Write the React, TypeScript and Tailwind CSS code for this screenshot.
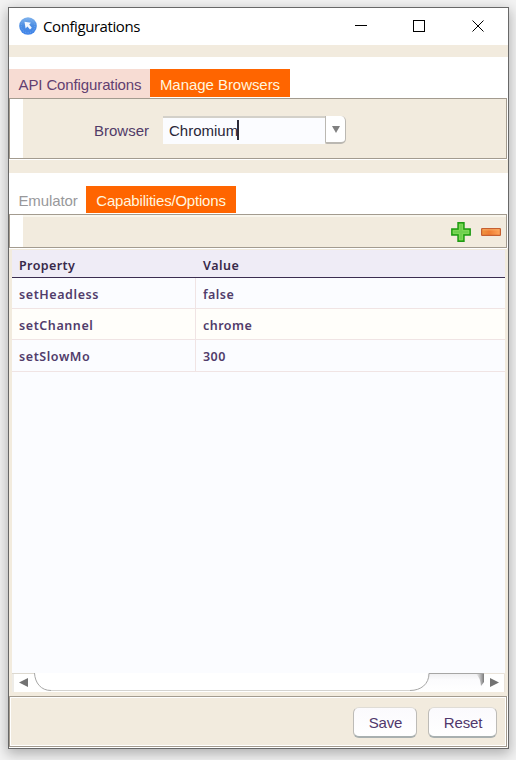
import React from "react";

const sans = "font-['Liberation_Sans',Arial,sans-serif]";
const tableFont = "font-['Noto_Sans',sans-serif]";

function AppIcon() {
  return (
    <svg className="-mt-px" width="18" height="18" viewBox="0 0 18 18">
      <defs>
        <linearGradient id="globe" x1="0" y1="0" x2="0" y2="1">
          <stop offset="0" stopColor="#80b3ed" />
          <stop offset="0.5" stopColor="#4a8ce2" />
          <stop offset="1" stopColor="#4284ea" />
        </linearGradient>
      </defs>
      <circle cx="9" cy="9" r="8.8" fill="url(#globe)" />
      <circle cx="9" cy="9" r="6.8" fill="none" stroke="#7db0f0" strokeWidth="0.8" strokeDasharray="1 1.5" />
      <path d="M5.5 4.8 L12 5.8 L10.2 7.6 L12.8 10.8 L11 12.4 L8.4 9.5 L6.6 11.4 Z" fill="#f4f8ff" />
    </svg>
  );
}

function TitleBar() {
  return (
    <div className="flex h-[37px] shrink-0 items-center bg-white pl-[10px]">
      <AppIcon />
      <span className="-mt-[2px] ml-[6px] font-['Open_Sans',sans-serif] text-[15px] leading-[20px] tracking-[-0.42px] text-black">Configurations</span>
      <svg className="-mt-[2px] ml-auto mr-[21px]" width="134" height="14" viewBox="0 0 134 14" fill="none" stroke="#000">
        <path d="M2 6.5H14" shapeRendering="crispEdges" />
        <rect x="60.5" y="1.5" width="11" height="11" shapeRendering="crispEdges" />
        <path d="M119.5 1.5L130.5 12.5M130.5 1.5L119.5 12.5" />
      </svg>
    </div>
  );
}

function Panel({ children, className }: { children?: React.ReactNode; className: string }) {
  return (
    <div className={"mr-px flex shrink-0 border border-[#a39b8f] bg-[#f2ebde] shadow-[0_1px_0_#fff,1px_0_0_#fff] " + className}>
      {children}
    </div>
  );
}

function PushButton({ label, className }: { label: string; className: string }) {
  return (
    <button
      className={
        "flex h-[31px] items-center justify-center rounded-[6px] border border-b-2 border-t-[#dfdcd6] border-r-[#bdbbb7] border-b-[#a9b0b0] border-l-[#bdbbb7] bg-gradient-to-b from-[#fbfafd] to-white pt-[2px] pl-px text-[15px] tracking-[-0.15px] text-[#50386c] " + className
      }
    >
      {label}
    </button>
  );
}

const rows = [
  { property: "setHeadless", value: "false", style: "h-[31px] bg-[#fbfcff]" },
  { property: "setChannel", value: "chrome", style: "h-[31px] bg-[#fffefa]" },
  { property: "setSlowMo", value: "300", style: "h-[32px] bg-[#fbfcff]" },
];

function PropertyTable() {
  return (
    <div className={"flex h-[423px] shrink-0 flex-col bg-[#fbfcff] text-[12.5px] font-semibold text-[#513c6b] " + tableFont}>
      <div className="flex h-[28px] items-center border-b border-[#3b2d50] bg-[#efecf6] pt-[5px] text-[#38294a]">
        <span className="w-[184px] pl-[7px] tracking-[0.4px]">Property</span>
        <span className="pl-[7px] tracking-[0.5px]">Value</span>
      </div>
      {rows.map((row) => (
        <div key={row.property} className={"flex shrink-0 border-b border-[#f0e4e4] " + row.style}>
          <div className="flex w-[184px] items-center border-r border-[#f0e4e4] pl-[7px] pt-[4px] tracking-[0.58px]">{row.property}</div>
          <div className="flex items-center pl-[7px] pt-[4px] tracking-[0.45px]">{row.value}</div>
        </div>
      ))}
    </div>
  );
}

function ScrollBar() {
  return (
    <svg className="block shrink-0" width="493" height="19" viewBox="0 0 493 19">
      <defs>
        <linearGradient id="track" x1="0" y1="0" x2="0" y2="1">
          <stop offset="0" stopColor="#eeeef0" />
          <stop offset="0.35" stopColor="#fbfbfd" />
          <stop offset="1" stopColor="#fff" />
        </linearGradient>
        <linearGradient id="shade" x1="0" y1="0" x2="1" y2="0">
          <stop offset="0" stopColor="#999" stopOpacity="0" />
          <stop offset="1" stopColor="#777" />
        </linearGradient>
      </defs>
      <rect width="493" height="19" fill="#fff" />
      <path d="M0 .5H22M1 0V19" fill="none" stroke="#ddd9d0" />
      <path d="M416 0H472V19H400C410 17 416 9 416 0Z" fill="url(#track)" />
      <path d="M22.5 0C23 10 29 17.5 39 17.5H398C409 17.5 417 11 417 .5H472" fill="none" stroke="#a6a6a5" />
      <path d="M39 17.5H398" stroke="#d4d3d0" />
      <path d="M464 1H472V9L469 13Q468 4 464 1Z" fill="url(#shade)" />
      <path d="M7 9.5L16 5V14Z" fill="#737373" />
      <path d="M487 9.5L478 5V14Z" fill="#737373" />
      <path d="M472 .5H492.5V19" fill="none" stroke="#e9e3da" />
    </svg>
  );
}

function AddIcon() {
  return (
    <svg width="20" height="20" viewBox="0 0 20 20">
      <path d="M7 .8H13V7H19.2V13H13V19.2H7V13H.8V7H7Z" fill="#43c51e" stroke="#1f9914" strokeWidth="1.4" />
      <path d="M8.4 2.2H11.6V8.4H17.8V11.6H11.6V17.8H8.4V11.6H2.2V8.4H8.4Z" fill="#6fd04f" stroke="#92e06d" strokeWidth=".7" />
    </svg>
  );
}

function RemoveIcon() {
  return (
    <svg width="20" height="8" viewBox="0 0 20 8">
      <defs>
        <linearGradient id="orange" x1="0" y1="0" x2="1" y2="0">
          <stop offset="0" stopColor="#ef963f" />
          <stop offset=".4" stopColor="#ee7c32" />
          <stop offset="1" stopColor="#ffa65b" />
        </linearGradient>
      </defs>
      <rect x=".6" y=".6" width="18.8" height="6.8" rx=".6" fill="url(#orange)" stroke="#c65f30" strokeWidth="1.2" />
      <path d="M1.5 1.8H18.5" stroke="#ffbb76" strokeWidth=".7" />
    </svg>
  );
}

export default function App() {
  return (
    <div className={"h-[760px] w-[516px] overflow-hidden bg-[#f3f3f3] pl-[8px] pt-[7px] " + sans}>
      <div className="flex h-[742px] w-[501px] flex-col border border-[#686868] bg-[#f2ebde] shadow-[0_4px_12px_1px_rgba(0,0,0,0.28)]">
        <TitleBar />
        <div className="h-[12px] shrink-0" />
        <div className="flex h-[41px] shrink-0 bg-white pt-[12px] text-[15px]">
          <div className="flex h-[29px] w-[141px] items-center justify-center bg-[#f7dcd3] pt-[3px] pl-px tracking-[-0.12px] text-[#623f70]">API Configurations</div>
          <div className="flex h-[28px] w-[140px] items-center justify-center bg-[#ff6500] pt-[4px] tracking-[-0.05px] text-[#fff5df]">Manage Browsers</div>
        </div>
        <Panel className="h-[61px]">
          <div className="w-[13px] bg-white" />
          <div className="flex h-full items-start pl-[71px] pt-[17px] text-[15px]">
            <label className="w-[69px] pt-[3px] leading-[24px] text-[#513b68]">Browser</label>
            <div className="flex h-[28px] w-[162px] items-center border-t-2 border-[#d3d0c9] bg-[#fbfcff] pl-[6px] text-[#292637]">
              <span className="pt-px">Chromium</span>
              <span className="-ml-px -mt-[2px] h-[20px] w-[2px] bg-[#2d2b38]" />
            </div>
            <div className="flex h-[28px] w-[21px] items-center justify-center rounded-r-[5px] rounded-bl-[2px] border-b-2 border-l border-r border-[#bbb8b2] bg-white">
              <svg width="8" height="7" viewBox="0 0 8 7"><path d="M0 0H8L4 7Z" fill="#808080" /></svg>
            </div>
          </div>
        </Panel>
        <div className="h-[14px] shrink-0" />
        <div className="flex h-[41px] shrink-0 bg-white pt-[13px] text-[15px]">
          <div className="flex h-[27px] w-[77px] items-center justify-center pl-px pt-[4px] tracking-[-0.1px] text-[#98989b]">Emulator</div>
          <div className="flex h-[27px] w-[150px] items-center justify-center bg-[#ff6500] pt-[4px] tracking-[-0.2px] text-[#fff5df]">Capabilities/Options</div>
        </div>
        <Panel className="h-[34px]">
          <div className="w-[13px] bg-white" />
          <div className="flex flex-1 items-center justify-end gap-[10px] border-t-2 border-[#f9f6ed] pr-[5px]">
            <AddIcon />
            <RemoveIcon />
          </div>
        </Panel>
        <div className="ml-[3px] mt-[2px] w-[493px] shrink-0">
          <PropertyTable />
          <ScrollBar />
        </div>
        <div className="h-[4px] shrink-0" />
        <Panel className="h-[51px]">
          <div className="flex w-full justify-end gap-[11px] border border-white pr-[8px] pt-[9px]">
            <PushButton label="Save" className="w-[64px]" />
            <PushButton label="Reset" className="w-[69px]" />
          </div>
        </Panel>
      </div>
    </div>
  );
}
